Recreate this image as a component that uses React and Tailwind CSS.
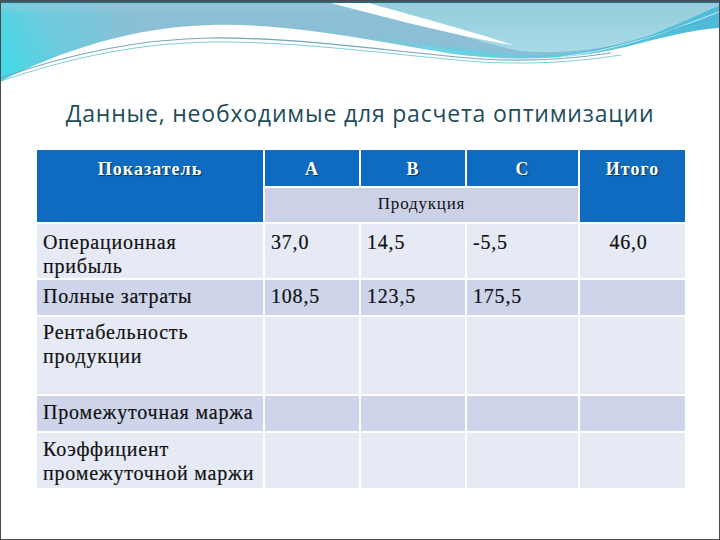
import React from 'react'

const Wave = () => {
  return (
    <svg className="absolute top-0 left-0" width="720" height="92" viewBox="0 0 720 92">
      <defs>
        <linearGradient id="leftCyan" gradientUnits="userSpaceOnUse" x1="0" y1="82" x2="130" y2="10">
          <stop offset="0" stopColor="#3edbe9" />
          <stop offset="0.45" stopColor="#6ccbdd" />
          <stop offset="1" stopColor="#8bbfd6" />
        </linearGradient>
        <linearGradient id="rightSky" x1="0" y1="0" x2="0" y2="1">
          <stop offset="0" stopColor="#93cddb" />
          <stop offset="1" stopColor="#a8dae7" />
        </linearGradient>
        <linearGradient id="band" x1="0" y1="0" x2="1" y2="0">
          <stop offset="0" stopColor="#72d4e3" />
          <stop offset="1" stopColor="#4dbad8" />
        </linearGradient>
        <linearGradient id="midCyan" gradientUnits="userSpaceOnUse" x1="0" y1="20" x2="0" y2="56">
          <stop offset="0" stopColor="#8bbfd6" stopOpacity="0" />
          <stop offset="1" stopColor="#5fd0e2" stopOpacity="0.9" />
        </linearGradient>
      </defs>
      <rect x="0" y="0" width="720" height="92" fill="url(#leftCyan)" />
      <rect x="0" y="2" width="720" height="8" fill="#9dcadd" opacity="0.35" />
      <path d="M250,20 C330,28 420,44 520,54 L520,62 L250,40 Z" fill="url(#midCyan)" />
      <path d="M350,0 H720 V10 C650,40 590,55 520,50 C470,40 420,20 350,0 Z" fill="url(#rightSky)" />
      <path d="M420,44 C520,62 600,55 660,30 C690,18 705,10 720,4 V26 C680,36 640,48 580,56 C520,62 470,58 420,48 Z" fill="url(#band)" />
      <path d="M322,0 H360 C410,14 470,30 512,44 C460,36 390,18 322,0 Z" fill="#ffffff" />
      <path d="M0,80 C60,50 130,26 210,24 C300,22 380,42 460,54 C530,62 590,56 640,42 C680,32 700,28 720,27 V92 H0 Z" fill="#ffffff" />
      <path d="M0,77 C70,52 140,38 210,37 C300,36 400,52 480,58 C530,61 570,58 610,52" fill="none" stroke="#7aa6b8" strokeWidth="1.2" />
      <path d="M0,80 C70,56 140,42 210,41 C300,40 400,55 480,61 C540,64 580,60 620,54" fill="none" stroke="#5cc3cf" strokeWidth="1" opacity="0.8" />
      <path d="M560,56 C620,48 670,30 720,10" fill="none" stroke="#c6eef4" strokeWidth="1" />
      <path d="M590,50 C640,40 680,24 720,16" fill="none" stroke="#3fb1cf" strokeWidth="1" opacity="0.7" />
      <rect x="0" y="0" width="720" height="2" fill="#2f6577" />
    </svg>
  )
}

const hd = "bg-[#0f6bc0] text-white font-bold text-[18px] tracking-[1px] text-center [text-shadow:1px_1px_1px_rgba(0,0,0,0.55)]"
const light = "bg-[#e6eaf4]"
const dark = "bg-[#ced5ea]"
const cell = "px-[6px] text-[20px] leading-[24px] tracking-[0.8px] text-[#111] [-webkit-text-stroke:0.2px_#111]"

const App = () => {
  return (
    <div className="relative w-[720px] h-[540px] bg-white overflow-hidden border border-[#4b4b4b] font-['Liberation_Serif',serif]">
      <Wave />
      <div className="relative pt-[95px]">
        <h1 className="text-center text-[23px] text-[#1d4d5c] tracking-[0.8px] font-['Open_Sans',sans-serif]">
          Данные, необходимые для расчета оптимизации
        </h1>
      </div>
      <div className="absolute left-[36px] top-[149px] grid gap-[2px] bg-white grid-cols-[226px_94px_104px_111px_105px] grid-rows-[36px_34px_54px_35px_77px_35px_55px]">
        <div className={`${hd} row-span-2 pt-[6px]`}>Показатель</div>
        <div className={`${hd} pt-[6px]`}>А</div>
        <div className={`${hd} pt-[6px]`}>В</div>
        <div className={`${hd} pt-[6px]`}>С</div>
        <div className={`${hd} row-span-2 pt-[6px]`}>Итого</div>
        <div className="col-span-3 bg-[#cbd2e8] text-center text-[17px] tracking-[0.8px] pt-[3px] text-[#111]">Продукция</div>

        <div className={`${light} ${cell} pt-[6px]`}>Операционная прибыль</div>
        <div className={`${light} ${cell} pt-[6px]`}>37,0</div>
        <div className={`${light} ${cell} pt-[6px]`}>14,5</div>
        <div className={`${light} ${cell} pt-[6px]`}>-5,5</div>
        <div className={`${light} ${cell} pt-[6px] text-center pr-[14px]`}>46,0</div>

        <div className={`${dark} ${cell} pt-[4px]`}>Полные затраты</div>
        <div className={`${dark} ${cell} pt-[4px]`}>108,5</div>
        <div className={`${dark} ${cell} pt-[4px]`}>123,5</div>
        <div className={`${dark} ${cell} pt-[4px]`}>175,5</div>
        <div className={dark}></div>

        <div className={`${light} ${cell} pt-[3px]`}>Рентабельность продукции</div>
        <div className={light}></div>
        <div className={light}></div>
        <div className={light}></div>
        <div className={light}></div>

        <div className={`${dark} ${cell} pt-[4px]`}>Промежуточная маржа</div>
        <div className={dark}></div>
        <div className={dark}></div>
        <div className={dark}></div>
        <div className={dark}></div>

        <div className={`${light} ${cell} pt-[4px]`}>Коэффициент промежуточной маржи</div>
        <div className={light}></div>
        <div className={light}></div>
        <div className={light}></div>
        <div className={light}></div>
      </div>
    </div>
  )
}

export default App
